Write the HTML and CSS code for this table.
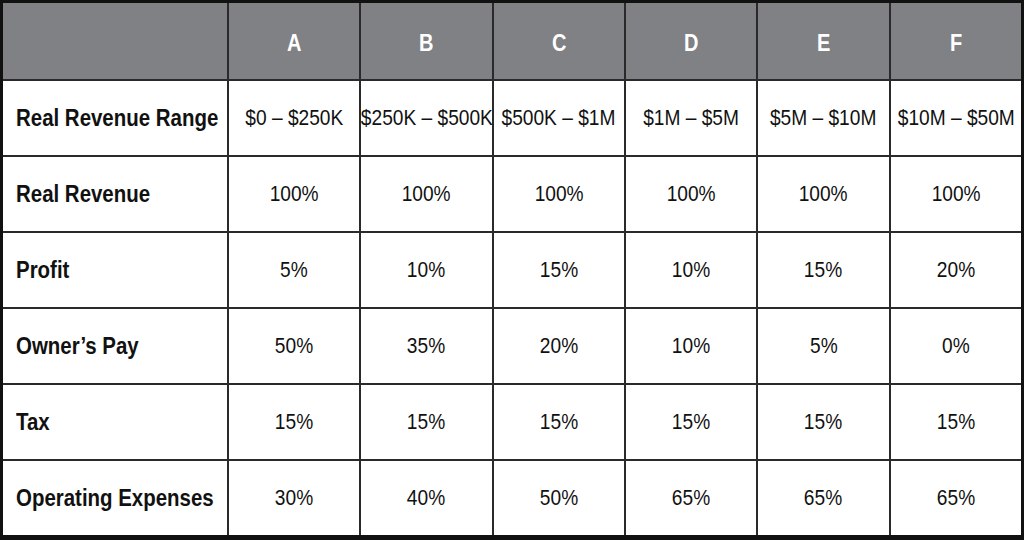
FILE: index.html
```html
<!DOCTYPE html>
<html>
<head>
<meta charset="utf-8">
<link rel="stylesheet" href="styles.css">
</head>
<body>
<table class="grid">
  <colgroup>
    <col class="label-col">
    <col><col><col><col><col><col>
  </colgroup>
  <thead>
    <tr class="head-row">
      <th></th>
      <th><span class="t">A</span></th><th><span class="t">B</span></th><th><span class="t">C</span></th><th><span class="t">D</span></th><th><span class="t">E</span></th><th><span class="t">F</span></th>
    </tr>
  </thead>
  <tbody>
    <tr>
      <th class="label"><span class="t">Real Revenue Range</span></th>
      <td><span class="t">$0 – $250K</span></td><td><span class="t">$250K – $500K</span></td><td><span class="t">$500K – $1M</span></td><td><span class="t">$1M – $5M</span></td><td><span class="t">$5M – $10M</span></td><td><span class="t">$10M – $50M</span></td>
    </tr>
    <tr>
      <th class="label"><span class="t">Real Revenue</span></th>
      <td><span class="t">100%</span></td><td><span class="t">100%</span></td><td><span class="t">100%</span></td><td><span class="t">100%</span></td><td><span class="t">100%</span></td><td><span class="t">100%</span></td>
    </tr>
    <tr>
      <th class="label"><span class="t">Profit</span></th>
      <td><span class="t">5%</span></td><td><span class="t">10%</span></td><td><span class="t">15%</span></td><td><span class="t">10%</span></td><td><span class="t">15%</span></td><td><span class="t">20%</span></td>
    </tr>
    <tr>
      <th class="label"><span class="t">Owner’s Pay</span></th>
      <td><span class="t">50%</span></td><td><span class="t">35%</span></td><td><span class="t">20%</span></td><td><span class="t">10%</span></td><td><span class="t">5%</span></td><td><span class="t">0%</span></td>
    </tr>
    <tr>
      <th class="label"><span class="t">Tax</span></th>
      <td><span class="t">15%</span></td><td><span class="t">15%</span></td><td><span class="t">15%</span></td><td><span class="t">15%</span></td><td><span class="t">15%</span></td><td><span class="t">15%</span></td>
    </tr>
    <tr>
      <th class="label"><span class="t">Operating Expenses</span></th>
      <td><span class="t">30%</span></td><td><span class="t">40%</span></td><td><span class="t">50%</span></td><td><span class="t">65%</span></td><td><span class="t">65%</span></td><td><span class="t">65%</span></td>
    </tr>
  </tbody>
</table>
</body>
</html>
```
FILE: styles.css
```css
html, body {
  margin: 0;
  padding: 0;
  background: #ffffff;
}

.grid {
  width: 1024px;
  table-layout: fixed;
  border-collapse: separate;
  border-spacing: 0;
  border-style: solid;
  border-color: #111111;
  border-width: 3px 3px 5px 3px;
  font-family: "Liberation Sans", Arial, sans-serif;
  color: #111111;
}

.label-col {
  width: 224px;
}

.grid th,
.grid td {
  padding: 0;
  text-align: center;
  vertical-align: middle;
  border-left: 2px solid #2a2a2a;
  white-space: nowrap;
}

.grid tr > :first-child {
  border-left: none;
}

.t {
  display: inline-block;
  margin: 0 -30px;
  transform: scaleX(0.87);
  transform-origin: center;
}

.head-row th {
  height: 76px;
  background: #808184;
  color: #ffffff;
  font-size: 23px;
  font-weight: bold;
  padding-top: 5px;
  box-sizing: border-box;
}

.grid tbody th,
.grid tbody td {
  height: 74px;
  border-top: 2px solid #2a2a2a;
  font-size: 22px;
  font-weight: normal;
}

.grid tbody .label {
  text-align: left;
  padding-left: 13px;
  font-weight: bold;
  font-size: 23.5px;
}

.grid tbody .label .t {
  margin: 0;
  transform-origin: left center;
}
```
